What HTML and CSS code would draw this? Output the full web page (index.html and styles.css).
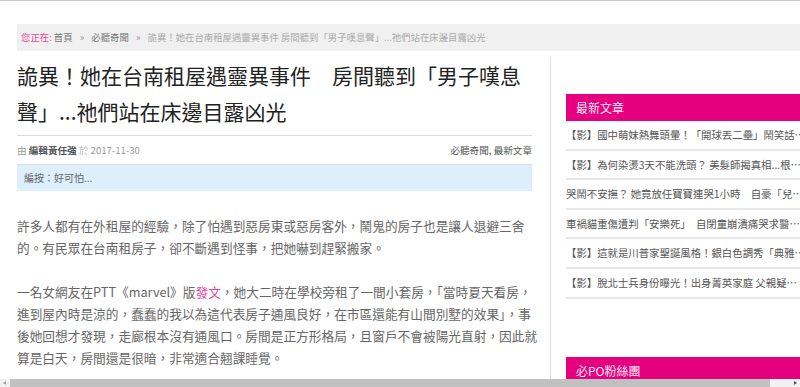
FILE: index.html
```html
<!DOCTYPE html>
<html>
<head>
<meta charset="UTF-8" />
<title>詭異！她在台南租屋遇靈異事件</title>
    <link rel="stylesheet" href="styles.css">
</head>
    <body>

    <div class="crumbs">
        <span class="here">您正在:</span>
        <a href="#">首頁</a>
        <span class="sep">»</span>
        <a href="#">必聽奇聞</a>
        <span class="sep">»</span>
        <span class="current">詭異！她在台南租屋遇靈異事件 房間聽到「男子嘆息聲」...祂們站在床邊目露凶光</span>
    </div>

    <div class="wrap">
        <div class="main">
            <h1>詭異！她在台南租屋遇靈異事件　房間聽到「男子嘆息聲」...祂們站在床邊目露凶光</h1>

            <div class="meta">
                <div class="by">由 <b>編輯黃任強</b> <span class="light">於</span> 2017-11-30</div>
                <div class="cats"><a href="#">必聽奇聞</a>, <a href="#">最新文章</a></div>
            </div>

            <div class="note">編按：好可怕...</div>

            <div class="content">
                <p>許多人都有在外租屋的經驗，除了怕遇到惡房東或惡房客外，鬧鬼的房子也是讓人退避三舍<br>的。有民眾在台南租房子，卻不斷遇到怪事，把她嚇到趕緊搬家。</p>
                <p>一名女網友在PTT《marvel》版<a href="#">發文</a>，她大二時在學校旁租了一間小套房，「當時夏天看房，<br>進到屋內時是涼的，蠢蠢的我以為這代表房子通風良好，在市區還能有山間別墅的效果」，事<br>後她回想才發現，走廊根本沒有通風口。房間是正方形格局，且窗戶不會被陽光直射，因此就<br>算是白天，房間還是很暗，非常適合翹課睡覺。</p>
            </div>
        </div>

        <div class="side">
            <div class="widget">
                <h3>最新文章</h3>
                <ul>
                    <li><a href="#">【影】國中萌妹熱舞頭暈！「開球丟二壘」鬧笑話　網友笑翻</a></li>
                    <li><a href="#">【影】為何染燙3天不能洗頭？ 美髮師揭真相...根本是騙人的</a></li>
                    <li><a href="#">哭鬧不安撫？ 她竟放任寶寶連哭1小時　自豪「兒子從此不哭了」</a></li>
                    <li><a href="#">車禍貓重傷遭判「安樂死」　自閉童崩潰痛哭求醫生救牠</a></li>
                    <li><a href="#">【影】這就是川普家聖誕風格！銀白色調秀「典雅奢華」</a></li>
                    <li><a href="#">【影】脫北士兵身份曝光！出身菁英家庭 父親疑是高官</a></li>
                </ul>
            </div>
            <div class="widget">
                <h3>必PO粉絲團</h3>
            </div>
        </div>
    </div>

    <div class="hscroll">
        <span class="arrow left"></span>
        <span class="thumb"></span>
        <span class="arrow right"></span>
    </div>

    </body>
</html>
```

FILE: styles.css
```css
html, body {
  margin: 0;
  overflow: hidden;
}
body {
  border-top: 1px solid #c8c8c8;
  font-family: "Noto Sans CJK TC", "Liberation Sans", sans-serif;
  color: #555;
  background: #fff;
}
a {
  color: inherit;
  text-decoration: none;
}

/* breadcrumbs */
.crumbs {
  margin: 23px 0 0 17px;
  height: 27px;
  line-height: 27px;
  padding-left: 4px;
  background: #f0f0f0;
  font-size: 9.4px;
  white-space: nowrap;
  color: #777;
}
.crumbs .here {
  color: #e8489a;
}
.crumbs .sep {
  color: #999;
  margin: 0 5px;
}
.crumbs .current {
  color: #aaa;
}

.wrap {
  display: flex;
  margin-top: 6px;
  padding-left: 17px;
}

/* article */
.main {
  width: 515px;
  flex: none;
}
.main h1 {
  margin: 0;
  font-size: 21px;
  line-height: 36px;
  font-weight: normal;
  color: #222;
}
.meta {
  display: flex;
  justify-content: space-between;
  align-items: center;
  margin-top: 6px;
  height: 28px;
  border-top: 1px solid #dcdcdc;
  border-bottom: 1px solid #dcdcdc;
  font-size: 9.6px;
  color: #999;
}
.meta b {
  color: #555;
}
.meta .light {
  color: #bbb;
}
.meta .cats {
  color: #555;
}
.note {
  height: 26px;
  line-height: 26px;
  padding-left: 7px;
  background: #ddeefc;
  font-size: 10px;
  color: #666;
}
.content {
  margin-top: 24px;
  font-size: 12.7px;
  line-height: 22px;
  color: #666;
}
.content p {
  margin: 0 0 22px;
  white-space: nowrap;
}
.content a {
  color: #e8489a;
}

/* sidebar */
.side {
  flex: none;
  width: 240px;
  margin-left: 18px;
  padding: 37px 0 0 15px;
  border-left: 1px solid #dedede;
  min-height: 400px;
}
.widget h3 {
  margin: 0;
  height: 27px;
  line-height: 27px;
  padding-left: 10px;
  background: #e4007e;
  color: #fce8f3;
  font-size: 12px;
  font-weight: normal;
}
.widget ul {
  list-style: none;
  margin: 0 0 58px;
  padding: 0;
}
.widget li {
  height: 27.6px;
  line-height: 27.6px;
  border-bottom: 2px solid #e8e8e8;
  font-size: 10.4px;
  color: #555;
  white-space: nowrap;
  overflow: hidden;
  text-overflow: ellipsis;
}

/* the cut-off horizontal scrollbar at the bottom */
.hscroll {
  position: fixed;
  left: 0;
  right: 0;
  bottom: 0;
  height: 8px;
  background: #f1f1f1;
}
.hscroll .thumb {
  position: absolute;
  left: 10px;
  top: 0;
  width: 760px;
  height: 8px;
  background: #c1c1c1;
}
.hscroll .arrow {
  position: absolute;
  top: 2px;
  width: 0;
  height: 0;
  border-top: 2px solid transparent;
  border-bottom: 2px solid transparent;
}
.hscroll .left {
  left: 3px;
  border-right: 3px solid #a3a3a3;
}
.hscroll .right {
  right: 3px;
  border-left: 3px solid #505050;
}
```
